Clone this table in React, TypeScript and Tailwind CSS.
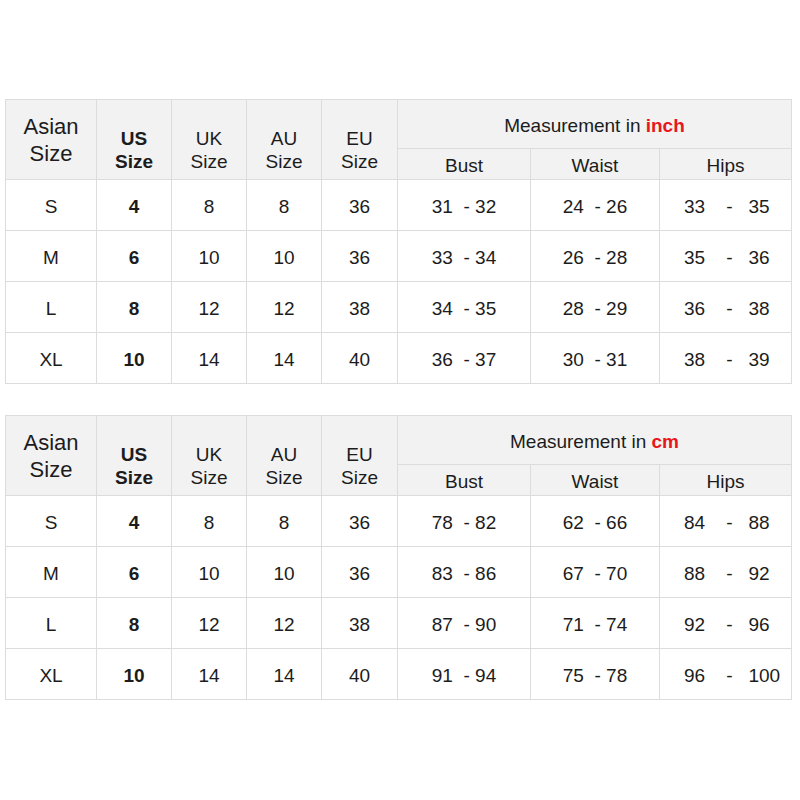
import React from 'react';

interface SizeRow {
    asian: string;
    us: string;
    uk: string;
    au: string;
    eu: string;
    bust: string;
    waist: string;
    hips: string;
}

const inchRows: SizeRow[] = [
    { asian: 'S', us: '4', uk: '8', au: '8', eu: '36', bust: '31  - 32', waist: '24  - 26', hips: '33    -   35' },
    { asian: 'M', us: '6', uk: '10', au: '10', eu: '36', bust: '33  - 34', waist: '26  - 28', hips: '35    -   36' },
    { asian: 'L', us: '8', uk: '12', au: '12', eu: '38', bust: '34  - 35', waist: '28  - 29', hips: '36    -   38' },
    { asian: 'XL', us: '10', uk: '14', au: '14', eu: '40', bust: '36  - 37', waist: '30  - 31', hips: '38    -   39' },
];

const cmRows: SizeRow[] = [
    { asian: 'S', us: '4', uk: '8', au: '8', eu: '36', bust: '78  - 82', waist: '62  - 66', hips: '84    -   88' },
    { asian: 'M', us: '6', uk: '10', au: '10', eu: '36', bust: '83  - 86', waist: '67  - 70', hips: '88    -   92' },
    { asian: 'L', us: '8', uk: '12', au: '12', eu: '38', bust: '87  - 90', waist: '71  - 74', hips: '92    -   96' },
    { asian: 'XL', us: '10', uk: '14', au: '14', eu: '40', bust: '91  - 94', waist: '75  - 78', hips: '96    -   100' },
];

const cell = 'border border-[#dcdcdc] text-center align-middle';

const SizeTable: React.FC<{ unit: string; rows: SizeRow[] }> = ({ unit, rows }) => (
    <table className="table-fixed border-collapse w-[786px] text-[19px] text-[#1c1c1c]">
        <colgroup>
            <col className="w-[91px]" />
            <col className="w-[75px]" />
            <col className="w-[75px]" />
            <col className="w-[75px]" />
            <col className="w-[76px]" />
            <col className="w-[133px]" />
            <col className="w-[129px]" />
            <col className="w-[132px]" />
        </colgroup>
        <thead className="bg-[#f2f2f2]">
            <tr className="h-[49px]">
                <th rowSpan={2} className={`${cell} font-normal text-[22px] leading-[27px]`}>Asian<br />Size</th>
                <th rowSpan={2} className={`${cell} font-bold leading-[23px] pt-[20px]`}>US<br />Size</th>
                <th rowSpan={2} className={`${cell} font-normal leading-[23px] pt-[20px]`}>UK<br />Size</th>
                <th rowSpan={2} className={`${cell} font-normal leading-[23px] pt-[20px]`}>AU<br />Size</th>
                <th rowSpan={2} className={`${cell} font-normal leading-[23px] pt-[20px]`}>EU<br />Size</th>
                <th colSpan={3} className={`${cell} font-normal text-[19px] leading-[24px] pt-[4px]`}>
                    Measurement in <span className="font-bold text-[#e8161d]">{unit}</span>
                </th>
            </tr>
            <tr className="h-[31px]">
                <th className={`${cell} font-normal leading-[24px] pt-[3px]`}>Bust</th>
                <th className={`${cell} font-normal leading-[24px] pt-[3px]`}>Waist</th>
                <th className={`${cell} font-normal leading-[24px] pt-[3px]`}>Hips</th>
            </tr>
        </thead>
        <tbody className="bg-white">
            {rows.map((r) => (
                <tr key={r.asian} className="h-[51px]">
                    <td className={`${cell} pt-[5px]`}>{r.asian}</td>
                    <td className={`${cell} pt-[5px] font-bold`}>{r.us}</td>
                    <td className={`${cell} pt-[5px]`}>{r.uk}</td>
                    <td className={`${cell} pt-[5px]`}>{r.au}</td>
                    <td className={`${cell} pt-[5px]`}>{r.eu}</td>
                    <td className={`${cell} pt-[5px] whitespace-pre`}>{r.bust}</td>
                    <td className={`${cell} pt-[5px] whitespace-pre`}>{r.waist}</td>
                    <td className="border border-[#dcdcdc] align-middle text-left pl-[24px] pt-[5px] whitespace-pre">{r.hips}</td>
                </tr>
            ))}
        </tbody>
    </table>
);

export default function App() {
    return (
        <div className="w-[800px] h-[800px] bg-white pl-[5px] pt-[99px] flex flex-col gap-[31px] font-['Liberation_Sans',Arial,sans-serif]">
            <SizeTable unit="inch" rows={inchRows} />
            <SizeTable unit="cm" rows={cmRows} />
        </div>
    );
}
